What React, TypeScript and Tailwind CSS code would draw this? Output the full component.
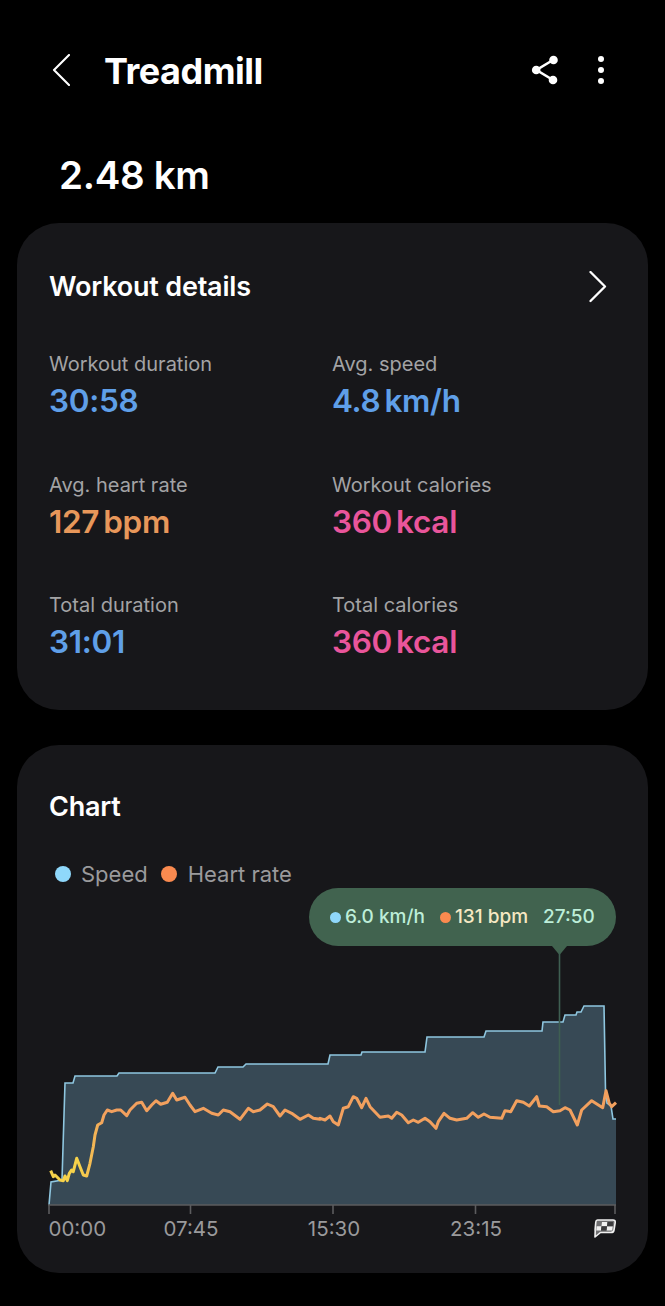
const hrLeft = [[62,332],[70,350],[75,345],[82,352],[90,360],[100,362],[105,348],[112,362],[118,340],[125,330],[130,335],[140,295],[150,320],[160,345],[170,348],[180,310],[190,260],[195,225],[203,195],[215,188],[222,165],[232,150],[245,155],[260,150],[272,150],[290,167],[300,150],[320,130],[335,127],[350,152],[365,135],[378,122],[392,133],[412,127],[428,100],[440,120],[465,112],[480,135],[495,155],[520,145],[545,160],[565,165],[580,150],[600,155],[630,178],[655,145],[670,155],[690,150],[712,132],[730,140],[750,168],[765,150],[785,160],[810,178],[835,165],[850,175],[870,178]];
const hrRight = [[0,175],[15,180],[30,168],[40,185],[55,195],[70,145],[85,140],[100,110],[110,115],[125,143],[138,115],[150,140],[180,172],[205,168],[215,175],[230,157],[245,165],[265,188],[280,180],[295,187],[315,175],[330,185],[348,205],[355,185],[372,160],[390,175],[410,180],[440,175],[458,158],[475,172],[492,162],[510,172],[545,175],[555,152],[572,155],[590,122],[610,127],[628,138],[650,110],[658,138],[680,140],[700,155],[720,152],[735,143],[750,150],[772,195],[785,150],[815,122],[848,143],[858,92],[868,130],[875,140],[888,128]];

const heartRate = [
    ...hrLeft.map(([x, y]) => `${(30 + x / 3).toFixed(1)},${(1060 + y / 3).toFixed(1)}`),
    ...hrRight.map(([x, y]) => `${(320 + x / 3).toFixed(1)},${(1060 + y / 3).toFixed(1)}`),
].join(' ');

const speed = '49,1205 51,1182 62,1180 65,1083 73,1083 75,1076 117,1076 119,1073 215,1073 218,1067 243,1067 246,1064 328,1064 330,1055 361,1055 362,1052 425,1052 427,1037 484,1037 486,1031 542,1031 543,1022 563,1022 565,1015 576,1015 577,1012 581,1012 584,1006 604,1006 605.5,1090 607,1103 611,1106 613,1119 616,1119';

const ticks = [49, 190.5, 333, 475.5, 615];

const stats = [
    { label: 'Workout duration', value: '30:58', color: 'text-[#5f9fe8]' },
    { label: 'Avg. speed', value: '4.8', unit: 'km/h', color: 'text-[#5f9fe8]' },
    { label: 'Avg. heart rate', value: '127', unit: 'bpm', color: 'text-[#e8975a]' },
    { label: 'Workout calories', value: '360', unit: 'kcal', color: 'text-[#e9559b]' },
    { label: 'Total duration', value: '31:01', color: 'text-[#5f9fe8]' },
    { label: 'Total calories', value: '360', unit: 'kcal', color: 'text-[#e9559b]' },
];

function Stat({ label, value, unit, color }: { label: string; value: string; unit?: string; color: string }) {
    return (
        <div>
            <div className="text-[20px] leading-[28px] text-[#a3a3a5]">{label}</div>
            <div className={`mt-[1px] text-[31.5px] leading-[44px] font-semibold tracking-[-0.3px] ${color}`}>
                {value}
                {unit && <span className="ml-[4px]">{unit}</span>}
            </div>
        </div>
    );
}

export default function App() {
    return (
        <div className="relative w-[665px] h-[1306px] bg-black text-white overflow-hidden font-['Inter',sans-serif]">
            {/* Header */}
            <div className="flex items-center h-[48px] mt-[47px] pl-[52px] pr-[61px]">
                <svg className="w-[18px] h-[32px] shrink-0 mb-[2px]" viewBox="0 0 18 32" fill="none">
                    <path d="M17 1 L2 16 L17 31" stroke="white" strokeWidth="2.1" strokeLinecap="round" strokeLinejoin="round" />
                </svg>
                <h1 className="ml-[34px] text-[36px] leading-[48px] font-bold tracking-[-0.5px]">Treadmill</h1>
                <svg className="ml-auto w-[28px] h-[30px] mb-[2px]" viewBox="0 0 28 30" fill="none">
                    <path d="M22 5 L5.5 15 L22 25" stroke="white" strokeWidth="2.6" />
                    <circle cx="22.5" cy="5" r="4.3" fill="white" />
                    <circle cx="22" cy="25" r="4.3" fill="white" />
                    <circle cx="5.2" cy="15" r="4.3" fill="white" />
                </svg>
                <div className="ml-[39px] flex flex-col gap-[5px] mb-[2px]">
                    <span className="w-[6px] h-[6px] rounded-full bg-white" />
                    <span className="w-[6px] h-[6px] rounded-full bg-white" />
                    <span className="w-[6px] h-[6px] rounded-full bg-white" />
                </div>
            </div>

            <div className="mt-[56px] pl-[59px] text-[38.5px] leading-[48px] font-semibold tracking-[-0.3px]">2.48 km</div>

            {/* Workout details */}
            <section className="mx-[17px] mt-[24px] h-[487px] rounded-[42px] bg-[#17171a] pl-[32px] pr-[41px] pt-[45px]">
                <div className="flex items-center justify-between h-[38px]">
                    <h2 className="text-[27px] leading-[38px] font-semibold tracking-[-0.2px]">Workout details</h2>
                    <svg className="w-[18px] h-[32px]" viewBox="0 0 18 32" fill="none">
                        <path d="M1.5 1 L16 15.5 L1.5 30" stroke="white" strokeWidth="2.3" strokeLinecap="round" strokeLinejoin="round" />
                    </svg>
                </div>
                <div className="grid grid-cols-[283px_1fr] gap-y-[47.5px] mt-[44px]">
                    {stats.map((s) => (
                        <Stat key={s.label} {...s} />
                    ))}
                </div>
            </section>

            {/* Chart */}
            <section className="relative mx-[17px] mt-[35px] h-[528px] rounded-[42px] bg-[#17171a] pt-[43px]">
                <h2 className="pl-[32px] text-[27px] leading-[38px] font-semibold tracking-[-0.2px]">Chart</h2>
                <div className="flex items-center mt-[32px] pl-[38px] text-[22px] leading-[32px] text-[#9a9a9c]">
                    <span className="w-[16px] h-[16px] rounded-full bg-[#8fd8fb]" />
                    <span className="ml-[10px]">Speed</span>
                    <span className="ml-[13px] w-[16px] h-[16px] rounded-full bg-[#fa8a4f]" />
                    <span className="ml-[11px]">Heart rate</span>
                </div>

                {/* Selected point tooltip */}
                <div className="absolute left-[292px] top-[143px] w-[307px] h-[58px] rounded-[29px] bg-[#41634f] flex items-center pl-[21px] pt-[1px] text-[19px] font-medium">
                    <span className="w-[11px] h-[11px] rounded-full bg-[#8fd8fb]" />
                    <span className="ml-[4px] text-[#bdeed9]">6.0 km/h</span>
                    <span className="ml-[15px] w-[11px] h-[11px] rounded-full bg-[#fa8a4f]" />
                    <span className="ml-[4px] text-[#f6e8c3]">131 bpm</span>
                    <span className="ml-[15px] text-[#bdeed9]">27:50</span>
                </div>

                <svg className="absolute left-0 top-[200px] w-[631px] h-[310px]" viewBox="17 945 631 310">
                    <defs>
                        <linearGradient id="hr" gradientUnits="userSpaceOnUse" x1="80" y1="0" x2="105" y2="0">
                            <stop offset="0" stopColor="#f6d24a" />
                            <stop offset="1" stopColor="#f2a05e" />
                        </linearGradient>
                    </defs>
                    <polygon points={`${speed} 616,1205`} fill="#374955" />
                    <polyline points={speed} fill="none" stroke="#8ec6df" strokeWidth="1.6" />
                    <path d="M552 946 L559.5 955 L567 946 Z" fill="#41634f" />
                    <line x1="559.5" y1="950" x2="559.5" y2="1105" stroke="#3f5f52" strokeWidth="1.6" />
                    <polyline points={heartRate} fill="none" stroke="url(#hr)" strokeWidth="3" strokeLinejoin="round" />
                    <line x1="48" y1="1205" x2="616" y2="1205" stroke="#5c5c5e" strokeWidth="1.6" />
                    {ticks.map((x) => (
                        <line key={x} x1={x} y1="1205" x2={x} y2="1214" stroke="#5c5c5e" strokeWidth="1.6" />
                    ))}
                    <g fill="#9a9a9c" fontSize="20.5" fontFamily="Inter, sans-serif">
                        <text x="48.5" y="1236">00:00</text>
                        <text x="191" y="1236" textAnchor="middle">07:45</text>
                        <text x="334" y="1236" textAnchor="middle">15:30</text>
                        <text x="476" y="1236" textAnchor="middle">23:15</text>
                    </g>
                    {/* finish flag */}
                    <g transform="translate(593 1219)">
                        <path d="M4.5 1 H20 Q22.5 1 22.2 3.5 L21 11 Q20.6 13.5 18 13.5 H7.5 L2 18 L2.2 12 Q2 11 2.2 9.5 L2.8 3 Q3 1 4.5 1 Z" fill="#6f6f71" stroke="#f0f0f0" strokeWidth="1.6" strokeLinejoin="round" />
                        <path d="M9 3 H14.5 L14 7.3 H8.5 Z M8.5 7.3 H3.6 L3.3 11.5 H8 Z M19.8 7.3 H14 L13.5 11.5 H19.2 Z" fill="#f0f0f0" />
                        <path d="M14.5 3 H20 L19.8 7.3 H14 Z M8.5 7.3 H14 L13.5 11.5 H8 Z" fill="#3a3a3c" />
                    </g>
                </svg>
            </section>
        </div>
    );
}
